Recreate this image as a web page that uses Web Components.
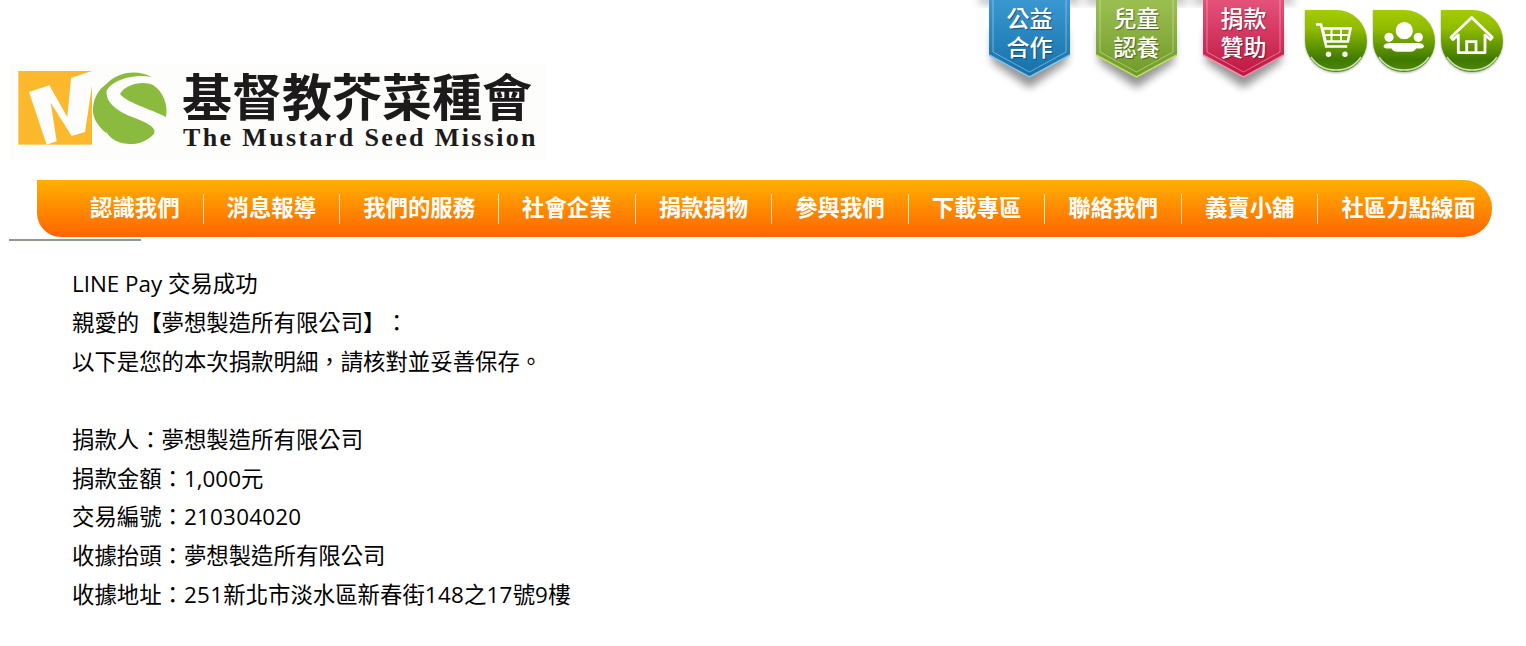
<!DOCTYPE html>
<html lang="zh-Hant">
<head>
<meta charset="utf-8">
<title>LINE Pay 交易成功</title>
<style>
  html, body { margin: 0; padding: 0; background: #fff; }
  body { font-family: "Open Sans", "Noto Sans CJK TC", sans-serif; color: #000; overflow: hidden; }
</style>
</head>
<body>
<ms-header>
  <ms-logo slot="logo"></ms-logo>
  <ms-ribbon tone="blue">公益<br>合作</ms-ribbon>
  <ms-ribbon tone="green">兒童<br>認養</ms-ribbon>
  <ms-ribbon tone="red">捐款<br>贊助</ms-ribbon>
  <ms-round icon="cart"></ms-round>
  <ms-round icon="people"></ms-round>
  <ms-round icon="home"></ms-round>
</ms-header>
<ms-nav>
  <ms-nav-item>認識我們</ms-nav-item>
  <ms-nav-item>消息報導</ms-nav-item>
  <ms-nav-item>我們的服務</ms-nav-item>
  <ms-nav-item>社會企業</ms-nav-item>
  <ms-nav-item>捐款捐物</ms-nav-item>
  <ms-nav-item>參與我們</ms-nav-item>
  <ms-nav-item>下載專區</ms-nav-item>
  <ms-nav-item>聯絡我們</ms-nav-item>
  <ms-nav-item>義賣小舖</ms-nav-item>
  <ms-nav-item last>社區力點線面</ms-nav-item>
</ms-nav>
<ms-receipt>
  <div>LINE Pay 交易成功</div>
  <div>親愛的【夢想製造所有限公司】：</div>
  <div>以下是您的本次捐款明細，請核對並妥善保存。</div>
  <div>&nbsp;</div>
  <div>捐款人：夢想製造所有限公司</div>
  <div>捐款金額：1,000元</div>
  <div>交易編號：<span style="letter-spacing:.25px">210304020</span></div>
  <div>收據抬頭：夢想製造所有限公司</div>
  <div>收據地址：<span style="letter-spacing:.3px">251</span>新北市淡水區新春街<span style="letter-spacing:.3px">148</span>之<span style="letter-spacing:.3px">17</span>號<span style="letter-spacing:.3px">9</span>樓</div>
</ms-receipt>

<script>
const ICONS = {
  cart: `<path d="M11 14.500h5l5.200 22h21" fill="none" stroke="#fff" stroke-width="2.600"/>
    <path d="M17.500 18.500h28l-2.600 13H20.500z" fill="none" stroke="#fff" stroke-width="2.600"/>
    <path d="M19 25h26M26.500 18v13M36 18v13" stroke="#fff" stroke-width="2"/>
    <circle cx="23.500" cy="44.300" r="2.700" fill="#fff"/><circle cx="40" cy="44.300" r="2.700" fill="#fff"/>`,
  people: `<circle cx="31.300" cy="20.700" r="8.600" fill="#fff"/><circle cx="16" cy="27.300" r="4.600" fill="#fff"/><circle cx="45.300" cy="27.300" r="4.600" fill="#fff"/>
    <path d="M10.500 36c1-2 3-3 6-3h28c4 0 6 1 6.500 3 0 2-2 2.500-5 2.500h-3c-1 2.500-3 3.200-6 3.200H24.500c-3 0-5-.7-6-3.200h-3c-3 0-5-.5-5-2.500z" fill="#fff"/>`,
  home: `<path d="M10 27.300 30.700 7.500 51.300 27.300l-2 2.200-5.300-4.500V42.700H17.300V25l-5.300 4.500z" fill="none" stroke="#fff" stroke-width="2.800" stroke-linejoin="round"/>
    <path d="M25.700 42.700V31.700h9.300v11" fill="none" stroke="#fff" stroke-width="2.800"/>`
};

class MsHeader extends HTMLElement {
  connectedCallback() {
    if (this.shadowRoot) return;
    this.attachShadow({ mode: 'open' }).innerHTML = `
      <style>
        :host { display:flex; justify-content:space-between; height:180px; }
        .left { padding:63px 0 0 9px; }
        .right { display:flex; align-items:flex-start; padding-right:23px; }
      </style>
      <div class="left"><slot name="logo"></slot></div>
      <div class="right"><slot></slot></div>
    `;
  }
}

class MsLogo extends HTMLElement {
  connectedCallback() {
    if (this.shadowRoot) return;
    this.attachShadow({ mode: 'open' }).innerHTML = `
      <style>
        :host { display:flex; width:538px; height:97px; background:#fdfdfb; }
        svg { flex:none; display:block; margin-left:1px; }
        .names { margin-left:7px; }
        .zh { font:700 50px/54px "Noto Sans CJK TC", sans-serif; color:#1c1a1a; white-space:nowrap; margin-top:4px; }
        .en { font:700 26px/28px "Liberation Serif", serif; color:#1c1a1a; letter-spacing:2.36px; margin-left:1px; white-space:nowrap; margin-top:3px; }
      </style>
      <svg width="165" height="95" viewBox="0 3 495 285">
        <rect x="25" y="27" width="221" height="221" fill="#fdb92e"/>
        <path d="M57 90 118 70 172 165 183 48 246 27 246 70 225 210 185 222 122 122 140 238 110 248z" fill="#fdfdfb"/>
        <path d="M285 70C320 30 380 20 425 45 380 35 310 50 290 85 285 120 320 150 380 170 420 185 440 200 432 215 410 240 375 250 350 245 320 245 290 225 280 190L290 215C255 185 245 160 250 130 255 100 270 80 285 70z" fill="#8bbb3e"/>
        <path d="M330 95C350 65 400 55 430 70 460 90 475 130 468 165 420 140 345 120 330 95z" fill="#8bbb3e"/>
      </svg>
      <div class="names">
        <div class="zh">基督教芥菜種會</div>
        <div class="en">The Mustard Seed Mission</div>
      </div>
    `;
  }
}

class MsRibbon extends HTMLElement {
  connectedCallback() {
    if (this.shadowRoot) return;
    const tone = this.getAttribute('tone') || 'blue';
    const palette = {
      blue: ['#3b97d0', '#1470a8', '#86c6ee'],
      green: ['#9cbf52', '#6f9a28', '#bfe065'],
      red: ['#e4527a', '#bf1540', '#f68fa9'],
    };
    const [top, bottom, edge] = palette[tone];
    this.attachShadow({ mode: 'open' }).innerHTML = `
      <style>
        :host { display:grid; width:81px; height:92px; margin-right:26px; }
        :host([tone="red"]) { margin-right:21px; }
        svg { grid-area:1/1; display:block; overflow:visible; }
        .label { grid-area:1/1; z-index:1; padding-top:3px; text-align:center; color:#fff; font:500 23px/28.5px "Noto Sans CJK TC", sans-serif; text-shadow:1px 1px 1px rgba(0,0,0,.4); }
      </style>
      <svg width="81" height="92" viewBox="0 0 81 92">
        <defs>
          <linearGradient id="f" x1="0" y1="0" x2="0" y2="1"><stop offset="0" stop-color="${top}"/><stop offset="1" stop-color="${bottom}"/></linearGradient>
          <filter id="b" x="-30%" y="-30%" width="160%" height="170%"><feGaussianBlur stdDeviation="4.500"/></filter>
        </defs>
        <rect x="-10" y="-4" width="101" height="8" fill="#000" opacity=".28" filter="url(#b)"/>
        <path d="M3 30H78V62L40.500 88 3 62z" fill="#000" opacity=".42" filter="url(#b)"/>
        <path d="M0 0H81V55L40.500 77 0 55z" fill="url(#f)"/>
        <path d="M0 55 40.500 77 81 55" fill="none" stroke="${edge}" stroke-width="1.500"/>
        <path d="M4 0V52L40.500 72 77 52V0" fill="none" stroke="#fff" stroke-opacity=".38" stroke-width="1"/>
      </svg>
      <div class="label"><slot></slot></div>
    `;
  }
}

class MsRound extends HTMLElement {
  connectedCallback() {
    if (this.shadowRoot) return;
    const name = this.getAttribute('icon');
    this.attachShadow({ mode: 'open' }).innerHTML = `
      <style>
        :host { display:block; width:62px; height:62px; margin:10px 6px 0 0; }
        :host(:last-child) { margin-right:0; }
        svg { display:block; filter:blur(.45px) drop-shadow(0 1px 1px rgba(0,0,0,.3)); }
      </style>
      <svg width="62" height="62" viewBox="0 0 62 62">
        <defs>
          <linearGradient id="g" x1="0" y1="0" x2="0" y2="1">
            <stop offset="0" stop-color="#a5cc00"/><stop offset=".3" stop-color="#8fbb00"/><stop offset=".8" stop-color="#3f7a00"/><stop offset="1" stop-color="#4d8a08"/>
          </linearGradient>
        </defs>
        <path d="M0 0h31a31 31 0 1 1-31 31z" fill="url(#g)"/>
        <path d="M6 47c6 9 14 13 25 13s19-4 25-13" fill="none" stroke="#e8f2d4" stroke-width="1.500" opacity=".85"/>
        ${ICONS[name] || ''}
      </svg>
    `;
  }
}

class MsNav extends HTMLElement {
  connectedCallback() {
    if (this.shadowRoot) return;
    this.attachShadow({ mode: 'open' }).innerHTML = `
      <style>
        :host { display:block; height:61px; }
        .bar { display:flex; align-items:center; box-sizing:border-box; height:57px; margin:0 34px 0 37px; padding-left:30px; background:linear-gradient(#ffb000,#ff6400); border-radius:0 28px 28px 24px; }
        .rule { width:132px; height:2px; margin:2px 0 0 9px; background:#8d9a8d; }
      </style>
      <div class="bar"><slot></slot></div>
      <div class="rule"></div>
    `;
  }
}

class MsNavItem extends HTMLElement {
  connectedCallback() {
    if (this.shadowRoot) return;
    this.attachShadow({ mode: 'open' }).innerHTML = `
      <style>
        :host { display:block; padding:0 23px; height:30px; font:700 22.4px/24px "Noto Sans CJK TC", sans-serif; color:#fff; white-space:nowrap; border-right:1px solid #ffe6b8; }
        :host([last]) { border-right:0; padding-right:0; }
      </style>
      <slot></slot>
    `;
  }
}

class MsReceipt extends HTMLElement {
  connectedCallback() {
    if (this.shadowRoot) return;
    this.attachShadow({ mode: 'open' }).innerHTML = `
      <style>
        :host { display:block; padding:24px 0 0 72px; font-size:22.4px; line-height:38.9px; color:#000; text-spacing-trim:space-all; }
      </style>
      <slot></slot>
    `;
  }
}

customElements.define('ms-header', MsHeader);
customElements.define('ms-logo', MsLogo);
customElements.define('ms-ribbon', MsRibbon);
customElements.define('ms-round', MsRound);
customElements.define('ms-nav', MsNav);
customElements.define('ms-nav-item', MsNavItem);
customElements.define('ms-receipt', MsReceipt);
</script>
</body>
</html>
